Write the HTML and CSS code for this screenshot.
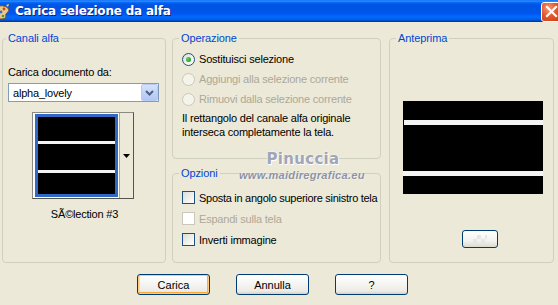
FILE: index.html
```html
<!DOCTYPE html>
<html lang="it">
<head>
<meta charset="utf-8">
<title>Carica selezione da alfa</title>
<link rel="stylesheet" href="styles.css">
</head>
<body>
<div class="window">
  <div class="titlebar">
    <svg class="app-icon" width="10" height="16" viewBox="0 0 10 16">
      <path d="M-4 3 Q3 0 8 4 Q10 7 7 9 Q5 10 6 12 Q6 15 1 15 L-4 15 Z" fill="#e9c98a" stroke="#7a5020" stroke-width="1"/>
      <circle cx="4" cy="5" r="1.4" fill="#d23a2a"/>
      <circle cx="1" cy="8" r="1.4" fill="#2f6fd8"/>
      <circle cx="3" cy="12" r="1.3" fill="#3aa03a"/>
      <path d="M6 1 L9 0 L8 3 Z" fill="#f0e060"/>
    </svg>
    <span class="title">Carica selezione da alfa</span>
    <div class="close">
      <svg width="13" height="13" viewBox="0 0 13 13"><path d="M2 2 L11 11 M11 2 L2 11" stroke="#fff" stroke-width="2.2" stroke-linecap="square"/></svg>
    </div>
  </div>

  <div class="client">
    <div class="groups">
      <fieldset class="group group-channels">
        <legend>Canali alfa</legend>
        <div class="field-label">Carica documento da:</div>
        <div class="combo">
          <span class="combo-text">alpha_lovely</span>
          <span class="combo-btn">
            <svg width="9" height="6" viewBox="0 0 9 6"><path d="M1 1 L4.5 4.5 L8 1" fill="none" stroke="#4d6185" stroke-width="2"/></svg>
          </span>
        </div>
        <div class="thumb">
          <div class="thumb-frame">
            <div class="thumb-img">
              <div class="blk h24"></div>
              <div class="wht h3"></div>
              <div class="blk h26"></div>
              <div class="wht h3"></div>
              <div class="blk grow"></div>
            </div>
          </div>
          <div class="thumb-btn">
            <svg width="7" height="4" viewBox="0 0 7 4"><path d="M0 0 H7 L3.5 4 Z" fill="#000"/></svg>
          </div>
        </div>
        <div class="caption">SÃ©lection #3</div>
      </fieldset>

      <div class="mid">
        <fieldset class="group group-op">
          <legend>Operazione</legend>
          <div class="opt-list">
            <div class="opt-row">
              <span class="radio checked"><span class="dot"></span></span>
              <span>Sostituisci selezione</span>
            </div>
            <div class="opt-row disabled">
              <span class="radio"></span>
              <span>Aggiungi alla selezione corrente</span>
            </div>
            <div class="opt-row disabled">
              <span class="radio"></span>
              <span>Rimuovi dalla selezione corrente</span>
            </div>
            <p class="desc">Il rettangolo del canale alfa originale<br>interseca completamente la tela.</p>
          </div>
        </fieldset>

        <fieldset class="group group-opts">
          <legend>Opzioni</legend>
          <div class="opt-list">
            <div class="chk-row">
              <span class="check"></span>
              <span class="tight">Sposta in angolo superiore sinistro tela</span>
            </div>
            <div class="chk-row disabled">
              <span class="check"></span>
              <span>Espandi sulla tela</span>
            </div>
            <div class="chk-row">
              <span class="check"></span>
              <span>Inverti immagine</span>
            </div>
          </div>
        </fieldset>
      </div>

      <fieldset class="group group-preview">
        <legend>Anteprima</legend>
        <div class="preview">
          <div class="blk h19"></div>
          <div class="wht h5 inset1"></div>
          <div class="blk h46"></div>
          <div class="wht h5"></div>
          <div class="blk grow"></div>
        </div>
        <div class="mini-btn"><span class="checker"></span></div>
      </fieldset>
    </div>

    <div class="buttons">
      <button class="btn default">Carica</button>
      <button class="btn">Annulla</button>
      <button class="btn">?</button>
    </div>
  </div>

  <div class="watermark">
    <div class="wm-name">Pinuccia</div>
    <div class="wm-url">www.maidiregrafica.eu</div>
  </div>
</div>
</body>
</html>
```

FILE: styles.css
```css
* { box-sizing: border-box; }

html, body {
  margin: 0;
  padding: 0;
  width: 558px;
  height: 305px;
  overflow: hidden;
  background: #ece9d8;
}

body {
  font-family: "Liberation Sans", Arial, sans-serif;
  font-size: 11px;
  letter-spacing: -0.2px;
  color: #000;
}

.window {
  position: relative;
  width: 558px;
  height: 305px;
  background: #ece9d8;
  overflow: hidden;
}

/* ---------- title bar ---------- */
.titlebar {
  height: 22px;
  display: flex;
  align-items: center;
  background: linear-gradient(to bottom,
    #0058ee 0%, #3593ff 4%, #288eff 6%, #127dff 8%, #036ffc 10%,
    #0262ee 14%, #0057e5 20%, #0054e3 24%, #0055eb 56%, #005bf5 66%,
    #026afe 76%, #0062ef 86%, #0052d6 92%, #0040ab 96%, #003092 100%);
}

.app-icon {
  flex: none;
  margin-top: 1px;
}

.title {
  margin-left: 5px;
  color: #fff;
  font-family: "DejaVu Sans", "Liberation Sans", sans-serif;
  font-weight: bold;
  font-size: 12px;
  letter-spacing: -0.2px;
  text-shadow: 1px 1px 0 #0a1e8c;
  flex: 1;
  white-space: nowrap;
}

.close {
  flex: none;
  width: 21px;
  height: 20px;
  margin-right: -4px;
  margin-top: 1px;
  border: 1px solid #fff;
  border-radius: 3px;
  background: radial-gradient(circle at 35% 30%, #f29a7b 0%, #e2582e 45%, #c93a10 100%);
  display: flex;
  align-items: center;
  justify-content: center;
}

/* ---------- client area ---------- */
.client {
  padding: 9px 4px 0 2px;
}

.groups {
  display: flex;
  height: 232px;
}

.group {
  margin: 0;
  padding: 0;
  min-width: 0;
  border: 1px solid #d0d0bf;
  border-radius: 4px;
}

.group legend {
  color: #0046d5;
  font-size: 11px;
  line-height: 14px;
  padding: 0 2px;
  margin-left: 6px;
  letter-spacing: -0.1px;
}

.disabled { color: #aca899; }

/* left group */
.group-channels {
  width: 164px;
  height: 232px;
}

.group-channels legend { margin-left: 3px; }

.field-label {
  margin-top: 21px;
  margin-left: 5px;
  line-height: 13px;
}

.combo {
  margin-top: 4px;
  margin-left: 5px;
  width: 151px;
  height: 19px;
  border: 1px solid #7f9db9;
  background: #fff;
  display: flex;
  align-items: center;
}

.combo-text {
  flex: 1;
  padding-left: 4px;
}

.combo-btn {
  width: 17px;
  height: 17px;
  border: 1px solid #b9cbf3;
  border-radius: 2px;
  background: linear-gradient(to bottom, #d6e2fc 0%, #c3d3f8 50%, #b3c6f4 100%);
  display: flex;
  align-items: center;
  justify-content: center;
}

.thumb {
  margin-top: 10px;
  margin-left: 29px;
  width: 102px;
  height: 87px;
  border: 1px solid #8a8a86;
  border-right-color: #55554f;
  border-bottom-color: #55554f;
  background: #fff;
  display: flex;
  padding: 1px 0 1px 2px;
}

.thumb-frame {
  width: 83px;
  height: 83px;
  border: 3px solid #316ac5;
  background: #000;
}

.thumb-img {
  height: 100%;
  display: flex;
  flex-direction: column;
}

.thumb-btn {
  margin-left: 1px;
  flex: 1;
  margin-top: -1px;
  margin-bottom: -1px;
  background: #ece9d8;
  border-left: 1px solid #aca899;
  display: flex;
  align-items: center;
  justify-content: center;
}

.blk { background: #000; }
.wht { background: #f4f4f4; }
.grow { flex: 1; }
.h3 { height: 3px; }
.h5 { height: 5px; }
.h19 { height: 19px; }
.h24 { height: 24px; }
.h26 { height: 26px; }
.h46 { height: 46px; }
.inset1 { margin-left: 1px; }

.caption {
  margin-top: 9px;
  text-align: center;
  line-height: 13px;
  padding-left: 1px;
}

/* middle column */
.mid {
  width: 209px;
  margin-left: 6px;
  display: flex;
  flex-direction: column;
}

.group-op {
  height: 128px;
}

.group-op .opt-list {
  padding: 4px 0 0 9px;
}

.group-opts {
  margin-top: 7px;
  flex: 1;
}

.group-opts .opt-list {
  padding: 7px 0 0 9px;
}

.opt-row, .chk-row {
  display: flex;
  align-items: center;
  height: 20px;
  white-space: nowrap;
}

.chk-row { height: 21px; }

.tight { letter-spacing: -0.28px; }

.radio {
  width: 13px;
  height: 13px;
  border-radius: 50%;
  border: 1px solid #1c5180;
  background: linear-gradient(135deg, #dcdcd7 0%, #f4f4f0 60%, #fff 100%);
  margin-right: 4px;
  display: flex;
  align-items: center;
  justify-content: center;
  flex: none;
}

.opt-row.disabled .radio {
  border-color: #cac8bb;
  background: #f5f4ea;
}

.dot {
  width: 5px;
  height: 5px;
  border-radius: 50%;
  background: radial-gradient(circle at 35% 35%, #5fd35f 0%, #1f9a1f 80%);
}

.desc {
  margin: 2px 0 0 0;
  line-height: 14px;
}

.check {
  width: 13px;
  height: 13px;
  border: 1px solid #1c5180;
  background: linear-gradient(135deg, #dcdcd7 0%, #f1f1ee 60%, #fff 100%);
  margin-right: 4px;
  flex: none;
}

.chk-row.disabled .check {
  border-color: #cac8bb;
  background: #fff;
}

/* right group */
.group-preview {
  width: 165px;
  margin-left: 8px;
}

.preview {
  margin-top: 56px;
  margin-left: 13px;
  width: 140px;
  height: 93px;
  display: flex;
  flex-direction: column;
  background: #000;
}

.mini-btn {
  margin-top: 36px;
  margin-left: 72px;
  width: 36px;
  height: 18px;
  border: 1px solid #003c74;
  border-radius: 3px;
  background: linear-gradient(to bottom, #ffffff 0%, #f3f3ef 60%, #dedad0 100%);
  display: flex;
  align-items: center;
  justify-content: center;
}

.checker {
  width: 14px;
  height: 8px;
  background:
    linear-gradient(45deg, #e6e6e6 25%, transparent 25%, transparent 75%, #e6e6e6 75%),
    linear-gradient(45deg, #e6e6e6 25%, transparent 25%, transparent 75%, #e6e6e6 75%);
  background-size: 8px 8px;
  background-position: 0 0, 4px 4px;
}

/* bottom buttons */
.buttons {
  display: flex;
  gap: 26px;
  padding-left: 135px;
  margin-top: 11px;
}

.btn {
  width: 73px;
  height: 21px;
  border: 1px solid #003c74;
  border-radius: 3px;
  background: linear-gradient(to bottom, #ffffff 0%, #f4f4f0 50%, #ecebe6 85%, #d6d0c5 100%);
  font-family: "Liberation Sans", Arial, sans-serif;
  font-size: 11px;
  color: #000;
  padding: 0;
}

.btn.default {
  box-shadow: inset 0 0 0 1px #ffc97a, inset 0 -2px 0 0 #f7a93b, inset 2px 0 0 #fcd9a0, inset -2px 0 0 #f7b045;
}

/* watermark overlay */
.watermark {
  position: absolute;
  left: 239px;
  top: 150px;
  pointer-events: none;
  text-align: center;
  width: 122px;
}

.wm-name {
  font-family: "DejaVu Sans", sans-serif;
  font-weight: bold;
  font-size: 15px;
  line-height: 18px;
  color: #a0a6b8;
  text-shadow: 0 0 2px #fff, 1px 1px 0 #fff;
  letter-spacing: 0.3px;
  padding-left: 6px;
}

.wm-url {
  font-family: "Liberation Sans", Arial, sans-serif;
  font-weight: bold;
  font-style: italic;
  font-size: 11px;
  line-height: 14px;
  color: #8d92a4;
  text-shadow: 0 0 2px #fff;
  letter-spacing: 0.3px;
}
```
